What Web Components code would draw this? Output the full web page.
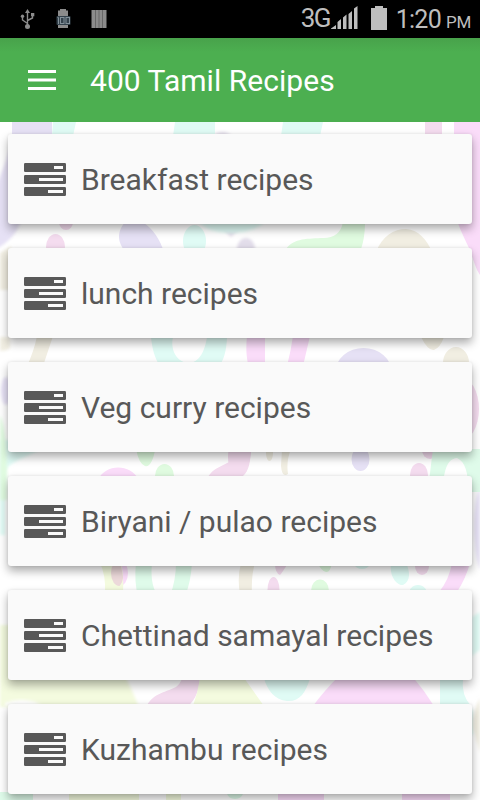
<!DOCTYPE html>
<html lang="en"><head><meta charset="utf-8"><title>400 Tamil Recipes</title>
<style>html,body{margin:0;height:100%;overflow:hidden;background:#fff;font-family:Roboto,sans-serif}</style></head>
<body><recipe-app></recipe-app>
<script>
const define=(name,html)=>customElements.define(name,class extends HTMLElement{
  constructor(){super();const t=document.createElement('template');t.innerHTML=html;this.attachShadow({mode:'open'}).append(t.content.cloneNode(true));}
});

define('status-bar',`<style>
:host{display:flex;height:38px;background:#000;color:#bebebe;align-items:flex-start;box-sizing:border-box;padding-right:9px;white-space:nowrap}
svg{display:block;flex:none}
.gap{flex:1}
.net{font-size:26px;line-height:36px;letter-spacing:-1.500px;width:30px}
.time{font-size:25px;line-height:38px;letter-spacing:-.7px;padding-top:1px}
.pm{font-size:17px;line-height:38px;padding-top:3px;margin-left:5px;letter-spacing:-.3px}
</style>
<svg width="120" height="38" viewBox="0 0 120 38">
 <g fill="none" stroke="#8c8c8c" stroke-width="1.4"><path d="M27.5 12V26M27.5 23.5L22.5 20V16M27.5 20.5L32.5 18V15"/></g>
 <g fill="#8c8c8c"><path d="M27.5 9L30 13H25z"/><circle cx="27.5" cy="26.5" r="2.5"/><circle cx="22.5" cy="16.2" r="1.7"/><path d="M31 13h3.3v3.3H31z"/>
 <path d="M60 9h6v1.5h2V28H58V10.500h2zM91.500 10h15v18h-15z"/></g>
 <rect x="56.500" y="16" width="14" height="9" rx="1" fill="#34424c"/>
 <g fill="none" stroke="#829099" stroke-width="1"><path d="M57.500 17.500h1V24"/><rect x="60.500" y="17.500" width="3.500" height="6"/><rect x="66" y="17.500" width="3.500" height="6"/></g>
 <path d="M95.500 10v18M99 10v18M102.500 10v18" stroke="#686868" stroke-width="1"/>
</svg><span class="gap"></span><span class="net">3G</span>
<svg width="65" height="38" viewBox="331 0 65 38" fill="#bebebe"><path d="M331 29V28.500L336 25V29zM337.500 29V22L341 19V29zM343 29V17.500L346.500 14.500V29zM348.500 29V14L352 11V29zM354 29V8.500L357.500 6V29zM371 8h4V6h8v2h4v22h-16z"/></svg>
<span class="time">1:20</span><span class="pm">PM</span>`);

define('app-bar',`<style>
:host{display:flex;height:84px;background:linear-gradient(#48a24b,#4caf50 14px);color:#fff;align-items:center;padding-left:28px;box-sizing:border-box}
svg{display:block;margin-right:34px;flex:none}
.t{font-size:30px;line-height:84px;white-space:nowrap;padding-top:2px;letter-spacing:.04px}
</style><svg width="28" height="21" viewBox="0 0 28 21" fill="#fff"><path d="M0 0h28v3H0zM0 8.500h28v3H0zM0 17h28v3H0z"/></svg><span class="t"><slot></slot></span>`);

define('recipe-card',`<style>
:host{display:flex;height:90px;box-sizing:border-box;align-items:center;padding-left:16px;background:#fafafa;border-radius:3px;box-shadow:0 5px 10px rgba(0,0,0,.33),0 0 3px rgba(0,0,0,.09);color:#585858}
svg{display:block;flex:none;margin-right:15px;margin-top:1px}
.t{font-size:30px;line-height:90px;white-space:nowrap;padding-top:2px}
</style><svg width="42" height="33" viewBox="0 0 42 33"><g fill="#585858"><rect width="42" height="9" rx="1.300"/><rect y="12" width="42" height="9" rx="1.300"/><rect y="24" width="42" height="9" rx="1.300"/></g><path fill="#fafafa" d="M30 3h9v3h-9zM15 15h24v3H15zM24 27h15v3H24z"/></svg><span class="t"><slot></slot></span>`);

define('pastel-backdrop',`<style>:host{display:block}svg{display:block;width:100%;height:100%}</style>
<svg viewBox="0 122 480 678" preserveAspectRatio="none">
<defs><filter id="b" x="-20%" y="-20%" width="140%" height="140%"><feGaussianBlur stdDeviation="1.500"/></filter></defs>
<g fill="#e6e1f5"><path d="M12 122H52V134H12z"/><path filter="url(#b)" d="M9 150C4 170 0 172 -5 195V250C8 242 17 235 22 218H30V150z"/><path d="M125 222C115 234 119 245 126 252H164C160 240 153 228 142 222z"/><ellipse cx="363.500" cy="372" rx="28" ry="24"/><ellipse cx="360.500" cy="459" rx="9" ry="12"/><ellipse filter="url(#b)" cx="6" cy="391" rx="5" ry="14"/><path filter="url(#b)" d="M480 488C472 500 472 550 480 570z"/></g>
<g fill="#e2ddea" filter="url(#b)"><ellipse cx="246" cy="249" rx="9" ry="11"/><path d="M215 134Q224 129 232 136H215zM223 229h16l-8 8z"/></g>
<g fill="#e0fbf5"><path d="M53 122H76L73 136H52zM175 122H215V136H173zM283 122H323L320 136H281z"/><ellipse cx="194.500" cy="241" rx="11.500" ry="16"/><path d="M151 337H173C170 350 177 362 188 363C200 363 205 350 207 337H227C226 365 216 378 188 378C160 378 153 358 151 337z"/><path d="M199 223H264C248 236 216 235 205 227z" filter="url(#b)"/><path d="M391 563C389 578 398 586 403 585C411 581 410 571 406 563z"/><ellipse cx="418" cy="596" rx="10" ry="11"/><path d="M264 678H310C306 693 299 702 287 701C275 700 267 690 264 678zM440 678H463Q461 695 471 706H440z"/><path filter="url(#b)" d="M0 440H50C41 454 16 457 5 470V535H0zM472 617L480 612V650Q471 655 472 660zM469 710h4v25h-4z"/><ellipse cx="362" cy="565" rx="7" ry="4"/></g>
<g fill="#f4dcef"><path d="M425 122H442V136H425z"/><ellipse cx="55.500" cy="247" rx="9.500" ry="13"/><ellipse cx="66" cy="222" rx="7" ry="8"/><path d="M237 449H251C252 465 243 475 234 479H207C213 466 226 466 235 458Q239 454 237 449z"/><ellipse cx="460" cy="409" rx="19" ry="32"/><ellipse cx="239" cy="457" rx="11" ry="20"/><ellipse cx="430" cy="450" rx="8" ry="9"/><ellipse cx="419" cy="475" rx="9" ry="12"/><path d="M276 563H288C284 570 281 574 280 575Q275 573 275 563z"/><ellipse cx="273.500" cy="590" rx="6" ry="13"/><ellipse cx="422" cy="566" rx="7" ry="9"/><path d="M182 678H200C199 694 193 704 184 708H146C151 694 164 693 176 687Q181 683 182 678z"/></g>
<g fill="#fadcf9"><path d="M454 122H480V275C475 268 473 258 469 248C462 233 455 220 454 205z"/><path d="M247 336H265V364H248C246 354 246 346 247 336zM293 336H310L303 366H287Q291 350 293 336z"/><path d="M98 480C105 464 130 463 139 480z"/><ellipse cx="119.500" cy="573" rx="8.500" ry="13"/><path d="M452 563H470Q466 578 457 592H439Q449 580 452 563zM339 676H412Q424 690 434 706H313Q324 691 339 676z"/><path d="M278 792h46v10h-46zM402 792h48v10h-48z"/></g>
<g fill="#e0fbe0"><path d="M343 222H365C365 235 363 244 360 252H284C292 238 305 239 321 238Q340 239 343 222z"/><path d="M136 449H155C154 460 149 468 145 466Q139 464 136 449z"/><ellipse cx="164.500" cy="476" rx="9.500" ry="12"/><path d="M318 563H332Q330 573 326 572Q321 571 318 563z"/><ellipse cx="320" cy="591" rx="9" ry="11.500"/><path filter="url(#b)" d="M0 415Q8 430 7 500H0z"/></g>
<g fill="#dffbea"><path d="M433 449H480V492H468Q469 463 457 458C446 459 445 472 443 482H429Q431 464 433 449z"/><path d="M136 562H152C151 574 151 586 158 596H138Q134 582 136 562zM176 562H192Q191 582 185 596H170Q176 580 176 562z"/><path d="M0 792h33v10H0z"/><ellipse cx="235" cy="793" rx="8" ry="6"/></g>
<g fill="#f1eee2"><path d="M376 252C382 236 394 229 406 229C419 230 427 240 432 252z"/><path d="M37 336H53L43 366H27Q34 351 37 336zM421 337H444Q440 348 434 350Q428 351 421 337z"/><ellipse cx="456" cy="363" rx="13" ry="16"/><path filter="url(#b)" d="M0 337H10V348Q8 351 0 351zM0 253L11 246V290H0zM480 698q-8 15-7 30l7 25z"/><ellipse cx="269.500" cy="453" rx="3.500" ry="8"/><path d="M282 449H291Q286 461 288 474Q282 478 281 466zM241 563H255Q251 576 252 594H240Q237 578 241 563z"/></g>
<g fill="#f4fbdf"><path d="M100 563H121Q124 575 123 594H105Q106 575 100 563z"/><path filter="url(#b)" d="M0 625H12V678H126Q132 690 139 707H0z"/><path d="M200 678H244Q252 689 264 706H193Q198 692 200 678z"/><path d="M69 792h70v10H69zM166 792h15v10h-15z"/></g>
<path fill="#ecd9da" d="M119.500 560A8.500 13 0 0 0 119.500 586Q123 582 123 577Q122 570 119.500 560z"/>
<path fill="#fff" filter="url(#b)" d="M5 703Q25 695 43 706H5z"/>
</svg>`);

define('recipe-app',`<style>
:host{display:flex;flex-direction:column;width:480px;height:800px;overflow:hidden;background:#fff}
status-bar,app-bar{flex:none}
main{display:grid;grid-template:minmax(0,1fr)/100%;flex:1;min-height:0;overflow:hidden}
pastel-backdrop,.list{grid-area:1/1;min-width:0;min-height:0}
.list{display:flex;flex-direction:column;gap:24px;padding:12px 8px 0}
recipe-card{flex:none}
</style><status-bar></status-bar><app-bar>400 Tamil Recipes</app-bar>
<main><pastel-backdrop></pastel-backdrop><div class="list">
<recipe-card>Breakfast recipes</recipe-card><recipe-card>lunch recipes</recipe-card><recipe-card>Veg curry recipes</recipe-card><recipe-card>Biryani / pulao recipes</recipe-card><recipe-card>Chettinad samayal recipes</recipe-card><recipe-card>Kuzhambu recipes</recipe-card>
</div></main>`);
</script></body></html>
